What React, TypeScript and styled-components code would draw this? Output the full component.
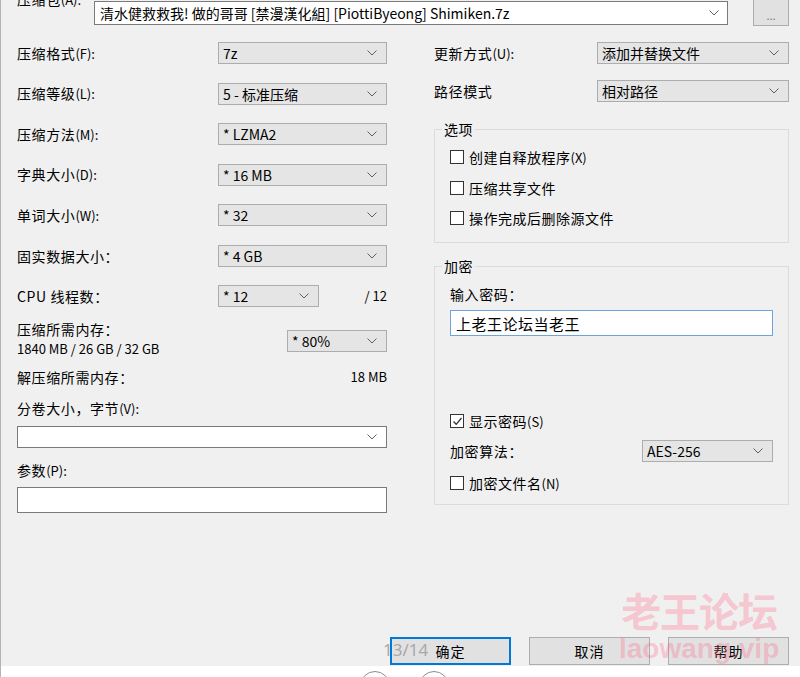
import React from "react";
import styled, { createGlobalStyle } from "styled-components";

const GlobalStyle = createGlobalStyle`
  html, body {
    margin: 0;
    padding: 0;
    background: #f0f0f0;
  }
  body {
    font-family: "Noto Sans CJK SC", sans-serif;
    color: #000;
  }
`;

const Chevron = () => (
  <svg width="10" height="6" viewBox="0 0 10 6">
    <polyline points="0.5,0.5 5,5 9.5,0.5" fill="none" stroke="#606060" strokeWidth="1" />
  </svg>
);

const Tick = () => (
  <svg width="11" height="11" viewBox="0 0 11 11">
    <polyline points="1.5,5.5 4.2,8.3 9.5,2" fill="none" stroke="#333" strokeWidth="1.3" />
  </svg>
);

const Dialog = styled.div`
  position: relative;
  width: 800px;
  height: 677px;
  overflow: hidden;
  background: #f0f0f0;
  border-left: 1px solid #b4b4b4;
  box-sizing: border-box;
  display: flex;
  flex-direction: column;
  font-size: 14px;
`;

const Content = styled.div`
  flex: 1;
  display: flex;
  flex-direction: column;
  padding: 0 11px 0 16px;
`;

const TopRow = styled.div`
  display: flex;
  align-items: flex-start;
  height: 25px;
`;

const ArchiveLabel = styled.div`
  width: 77px;
  margin-top: -11px;
  line-height: 20px;
  letter-spacing: 0.6px;
`;

const NameBox = styled.div`
  width: 634px;
  height: 24px;
  margin-top: 1px;
  box-sizing: border-box;
  border: 1px solid #7a7a7a;
  background: #fff;
  display: flex;
  align-items: center;
  justify-content: space-between;
  padding: 0 8px 0 5px;
  font-size: 14px;
  white-space: nowrap;
`;

const BrowseButton = styled.div`
  width: 36px;
  height: 28px;
  margin: -2px 0 0 25px;
  box-sizing: border-box;
  border: 1px solid #adadad;
  background: #e1e1e1;
  color: #777;
  font-size: 11px;
  display: flex;
  align-items: flex-end;
  justify-content: center;
  padding-bottom: 5px;
  line-height: 10px;
`;

const Body = styled.div`
  display: grid;
  grid-template-columns: 370px 355px;
  column-gap: 47px;
  margin-top: 17px;
`;

const Column = styled.div`
  display: flex;
  flex-direction: column;
`;

const FieldRow = styled.div<{ $after?: number; $before?: number }>`
  display: flex;
  align-items: center;
  justify-content: space-between;
  height: 22px;
  margin-top: ${({ $before }) => $before ?? 0}px;
  margin-bottom: ${({ $after }) => $after ?? 0}px;
`;

const Label = styled.div<{ $before?: number }>`
  line-height: 20px;
  letter-spacing: 0.6px;
  white-space: nowrap;
  margin-top: ${({ $before }) => $before ?? 0}px;
`;

const Grow = styled(Label)`
  flex: 1;
`;

const Combo = styled.div<{ $width?: number; $white?: boolean; $before?: number }>`
  width: ${({ $width }) => ($width ? `${$width}px` : "100%")};
  height: 22px;
  margin-top: ${({ $before }) => $before ?? 0}px;
  box-sizing: border-box;
  border: 1px solid ${({ $white }) => ($white ? "#7a7a7a" : "#adadad")};
  background: ${({ $white }) => ($white ? "#fff" : "#e5e5e5")};
  display: flex;
  align-items: center;
  justify-content: space-between;
  padding: 0 9px 0 4px;
  font-size: 14px;
  white-space: nowrap;
  flex-shrink: 0;
`;

const TextBox = styled.div<{ $width?: number; $before?: number; $focused?: boolean }>`
  width: ${({ $width }) => ($width ? `${$width}px` : "100%")};
  height: 26px;
  margin-top: ${({ $before }) => $before ?? 0}px;
  box-sizing: border-box;
  border: 1px solid ${({ $focused }) => ($focused ? "#6ea6dc" : "#7a7a7a")};
  background: #fff;
  display: flex;
  align-items: center;
  padding: 0 5px;
  font-size: 15px;
  letter-spacing: 0.5px;
`;

const RightValue = styled.div<{ $width?: number }>`
  width: ${({ $width }) => ($width ? `${$width}px` : "auto")};
  text-align: right;
  font-size: 13px;
  line-height: 20px;
`;

const MemoryRow = styled.div`
  display: flex;
  justify-content: space-between;
  align-items: flex-start;
  height: 40px;
  margin-top: 12px;
`;

const MemoryText = styled.div`
  display: flex;
  flex-direction: column;
`;

const Small = styled.div`
  font-size: 13px;
  line-height: 20px;
`;

const InfoRow = styled.div<{ $before?: number }>`
  display: flex;
  justify-content: space-between;
  align-items: center;
  height: 20px;
  margin-top: ${({ $before }) => $before ?? 0}px;
`;

const Group = styled.fieldset<{ $before: number; $pad: string }>`
  margin: ${({ $before }) => $before}px 0 0 0;
  padding: ${({ $pad }) => $pad};
  border: 1px solid #dcdcdc;
  min-width: 0;
  display: flex;
  flex-direction: column;
`;

const Legend = styled.legend`
  padding: 0 2px;
  margin-left: -8px;
  line-height: 20px;
  font-size: 14px;
  letter-spacing: 0.6px;
`;

const CheckRow = styled.label<{ $before?: number }>`
  display: flex;
  align-items: center;
  height: 20px;
  margin-top: ${({ $before }) => $before ?? 0}px;
  letter-spacing: 0.5px;
  white-space: nowrap;
`;

const Box = styled.span`
  width: 14px;
  height: 14px;
  box-sizing: border-box;
  border: 1px solid #333;
  background: #fff;
  margin-right: 5px;
  display: flex;
  align-items: center;
  justify-content: center;
`;

const Mnemonic = styled.span`
  font-size: 13px;
  letter-spacing: 0;
`;

const ButtonRow = styled.div`
  display: flex;
  justify-content: flex-end;
  gap: 18px;
  height: 28px;
  margin-top: auto;
`;

const Button = styled.div<{ $default?: boolean }>`
  width: 121px;
  height: 28px;
  box-sizing: border-box;
  border: ${({ $default }) => ($default ? "2px solid #0078d7" : "1px solid #adadad")};
  background: #e1e1e1;
  display: flex;
  align-items: center;
  justify-content: center;
  font-size: 14px;
  letter-spacing: 1px;
`;

const ViewerBar = styled.div`
  height: 11px;
  margin-top: 1px;
  background: #fff;
  overflow: hidden;
  display: flex;
  gap: 29px;
  padding: 5px 0 0 359px;
  box-sizing: border-box;
`;

const RoundButton = styled.div`
  width: 30px;
  height: 30px;
  flex-shrink: 0;
  border-radius: 50%;
  border: 1.5px solid #8c8c8c;
  box-sizing: border-box;
`;

const PageCounter = styled.div`
  position: absolute;
  left: 382px;
  top: 639px;
  font-family: "Noto Sans", sans-serif;
  font-size: 17px;
  line-height: 22px;
  color: #a8a8a8;
`;

const Watermark = styled.div`
  position: absolute;
  left: 618px;
  top: 584px;
  display: flex;
  flex-direction: column;
  align-items: center;
  color: rgba(255, 95, 130, 0.3);
  pointer-events: none;
`;

const WatermarkTitle = styled.div`
  font-size: 40px;
  font-weight: 700;
  line-height: 52px;
  letter-spacing: -1px;
`;

const WatermarkUrl = styled.div`
  font-family: "Liberation Sans", sans-serif;
  font-size: 28px;
  font-weight: 700;
  line-height: 32px;
  margin-top: -3px;
`;

const leftRows: [string, string, string][] = [
  ["压缩格式", "(F):", "7z"],
  ["压缩等级", "(L):", "5 - 标准压缩"],
  ["压缩方法", "(M):", "* LZMA2"],
  ["字典大小", "(D):", "* 16 MB"],
  ["单词大小", "(W):", "* 32"],
  ["固实数据大小：", "", "* 4 GB"],
];

const App = () => (
  <>
    <GlobalStyle />
    <Dialog>
      <Content>
        <TopRow>
          <ArchiveLabel>
            压缩包<Mnemonic>(A):</Mnemonic>
          </ArchiveLabel>
          <NameBox>
            <span>清水健救救我! 做的哥哥 [禁漫漢化組] [PiottiByeong] Shimiken.7z</span>
            <Chevron />
          </NameBox>
          <BrowseButton>...</BrowseButton>
        </TopRow>

        <Body>
          <Column>
            {leftRows.map(([label, key, value]) => (
              <FieldRow key={label} $after={18.5}>
                <Label>
                  {label}
                  {key && <Mnemonic>{key}</Mnemonic>}
                </Label>
                <Combo $width={169}>
                  <span>{value}</span>
                  <Chevron />
                </Combo>
              </FieldRow>
            ))}
            <FieldRow>
              <Grow>CPU 线程数：</Grow>
              <Combo $width={101}>
                <span>* 12</span>
                <Chevron />
              </Combo>
              <RightValue $width={68}>/ 12</RightValue>
            </FieldRow>

            <MemoryRow>
              <MemoryText>
                <Label>压缩所需内存：</Label>
                <Small>1840 MB / 26 GB / 32 GB</Small>
              </MemoryText>
              <Combo $width={100} $before={11}>
                <span>* 80%</span>
                <Chevron />
              </Combo>
            </MemoryRow>

            <InfoRow $before={8}>
              <Label>解压缩所需内存：</Label>
              <RightValue>18 MB</RightValue>
            </InfoRow>

            <Label $before={11}>
              分卷大小，字节<Mnemonic>(V):</Mnemonic>
            </Label>
            <Combo $white $before={7}>
              <span />
              <Chevron />
            </Combo>

            <Label $before={12}>
              参数<Mnemonic>(P):</Mnemonic>
            </Label>
            <TextBox $before={6} />
          </Column>

          <Column>
            <FieldRow>
              <Label>
                更新方式<Mnemonic>(U):</Mnemonic>
              </Label>
              <Combo $width={192}>
                <span>添加并替换文件</span>
                <Chevron />
              </Combo>
            </FieldRow>
            <FieldRow $before={16}>
              <Label>路径模式</Label>
              <Combo $width={192}>
                <span>相对路径</span>
                <Chevron />
              </Combo>
            </FieldRow>

            <Group $before={17} $pad="8px 15px 14px 15px">
              <Legend>选项</Legend>
              <CheckRow>
                <Box />
                创建自释放程序<Mnemonic>(X)</Mnemonic>
              </CheckRow>
              <CheckRow $before={10.5}>
                <Box />
                压缩共享文件
              </CheckRow>
              <CheckRow $before={10.5}>
                <Box />
                操作完成后删除源文件
              </CheckRow>
            </Group>

            <Group $before={13} $pad="8px 15px 11px 15px">
              <Legend>加密</Legend>
              <Label>输入密码：</Label>
              <TextBox $focused $before={6}>
                上老王论坛当老王
              </TextBox>
              <CheckRow $before={75}>
                <Box>
                  <Tick />
                </Box>
                显示密码<Mnemonic>(S)</Mnemonic>
              </CheckRow>
              <FieldRow $before={9}>
                <Label>加密算法：</Label>
                <Combo $width={131}>
                  <span>AES-256</span>
                  <Chevron />
                </Combo>
              </FieldRow>
              <CheckRow $before={11}>
                <Box />
                加密文件名<Mnemonic>(N)</Mnemonic>
              </CheckRow>
            </Group>
          </Column>
        </Body>

        <ButtonRow>
          <Button $default>确定</Button>
          <Button>取消</Button>
          <Button>帮助</Button>
        </ButtonRow>
      </Content>

      <ViewerBar>
        <RoundButton />
        <RoundButton />
      </ViewerBar>

      <PageCounter>13/14</PageCounter>
      <Watermark>
        <WatermarkTitle>老王论坛</WatermarkTitle>
        <WatermarkUrl>laowang.vip</WatermarkUrl>
      </Watermark>
    </Dialog>
  </>
);

export default App;
